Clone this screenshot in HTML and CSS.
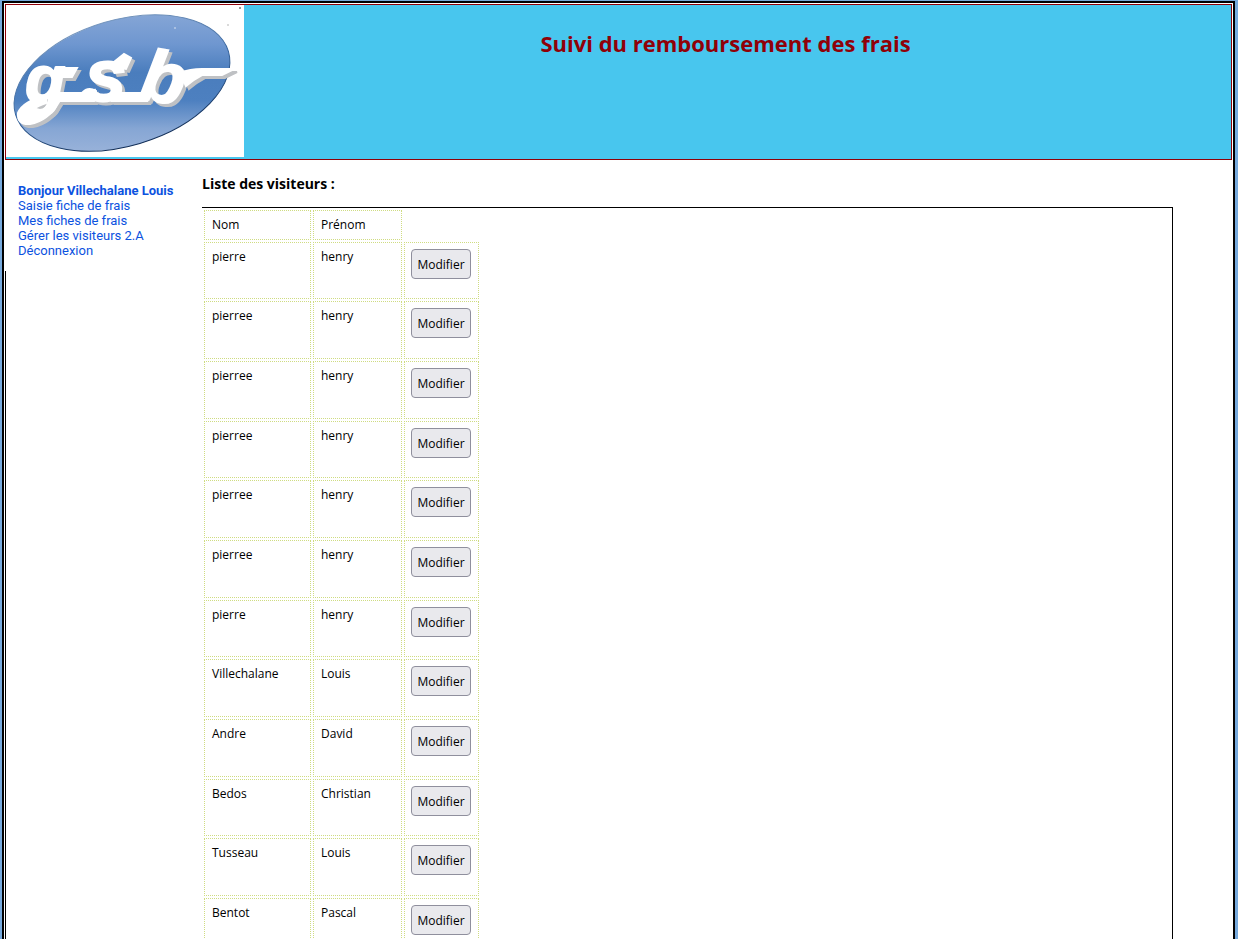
FILE: index.html
```html
<!DOCTYPE html>
<html lang="fr">
<head>
<meta charset="utf-8">
<title>Suivi du remboursement des frais</title>
<link rel="stylesheet" href="styles.css">
</head>
<body>
<div class="page">
  <header class="banner">
    <svg class="logo" viewBox="0 0 238 152" role="img" aria-label="gsb">
      <defs>
        <linearGradient id="oval" x1="0" y1="0" x2="0" y2="1">
          <stop offset="0" stop-color="#86a6d6"/>
          <stop offset=".22" stop-color="#6f97d0"/>
          <stop offset=".42" stop-color="#4a7dbd"/>
          <stop offset=".62" stop-color="#4d80c0"/>
          <stop offset=".82" stop-color="#86a6d4"/>
          <stop offset="1" stop-color="#9ab3da"/>
        </linearGradient>
        <linearGradient id="rim" x1="0" y1="0" x2="0" y2="1">
          <stop offset="0" stop-color="#7495bd"/>
          <stop offset=".5" stop-color="#34639d"/>
          <stop offset="1" stop-color="#102d57"/>
        </linearGradient>
        <clipPath id="ovalClip"><ellipse cx="116" cy="78" rx="111" ry="63" transform="rotate(-16.5 116 78)"/></clipPath>
        <g id="lettering">
          <text x="19" y="97" font-size="66">g</text>
          <text x="79" y="96" font-size="74">s</text>
          <text x="0" y="0" font-size="72" transform="translate(132 93) rotate(10)">b</text>
          <path d="M51 63H71L66 72H54ZM50 88H76Q82 81 90 86L88 96H46ZM110 88H138L141 96H106Z"/>
          <path d="M40 91Q17 96 12 108Q11 120 24 119Q42 116 53 97L45 96Q37 108 25 111Q22 104 40 98Z"/>
          <path d="M103 61L118 49L125 53L120 64Z"/>
          <path d="M174 68Q184 64 196 64H228L216 70H196Q188 74 180 81Z"/>
        </g>
      </defs>
      <rect width="238" height="152" fill="#fff"/>
      <g clip-path="url(#ovalClip)"><rect x="6" y="8" width="220" height="141" fill="url(#oval)"/></g>
      <ellipse cx="116" cy="78" rx="111" ry="63" transform="rotate(-16.5 116 78)" fill="none" stroke="url(#rim)" stroke-width="1"/>
      <use href="#lettering" x="3" y="3" class="logo-shadow"/>
      <use href="#lettering" class="logo-letters"/>
      <circle cx="234" cy="3" r="1" fill="#777"/><circle cx="222" cy="20" r=".7" fill="#999"/><circle cx="169" cy="23" r="1" fill="#b8cbe7"/>
    </svg>
    <h1>Suivi du remboursement des frais</h1>
  </header>
  <div class="columns">
    <div class="side">
      <nav class="menu" aria-label="Menu">
        <strong>Bonjour Villechalane Louis</strong>
        <a href="#saisie">Saisie fiche de frais</a>
        <a href="#fiches">Mes fiches de frais</a>
        <a href="#visiteurs">Gérer les visiteurs 2.A</a>
        <a href="#sortie">Déconnexion</a>
      </nav>
    </div>
    <main class="content">
      <h2>Liste des visiteurs :</h2>
      <div class="frame">
        <table class="visitors">
          <thead><tr><th scope="col">Nom</th><th scope="col">Prénom</th></tr></thead>
          <tbody>
            <tr><td>pierre</td><td>henry</td><td><button type="button">Modifier</button></td></tr>
            <tr><td>pierree</td><td>henry</td><td><button type="button">Modifier</button></td></tr>
            <tr><td>pierree</td><td>henry</td><td><button type="button">Modifier</button></td></tr>
            <tr><td>pierree</td><td>henry</td><td><button type="button">Modifier</button></td></tr>
            <tr><td>pierree</td><td>henry</td><td><button type="button">Modifier</button></td></tr>
            <tr><td>pierree</td><td>henry</td><td><button type="button">Modifier</button></td></tr>
            <tr><td>pierre</td><td>henry</td><td><button type="button">Modifier</button></td></tr>
            <tr><td>Villechalane</td><td>Louis</td><td><button type="button">Modifier</button></td></tr>
            <tr><td>Andre</td><td>David</td><td><button type="button">Modifier</button></td></tr>
            <tr><td>Bedos</td><td>Christian</td><td><button type="button">Modifier</button></td></tr>
            <tr><td>Tusseau</td><td>Louis</td><td><button type="button">Modifier</button></td></tr>
            <tr><td>Bentot</td><td>Pascal</td><td><button type="button">Modifier</button></td></tr>
          </tbody>
        </table>
      </div>
    </main>
  </div>
</div>
</body>
</html>
```
FILE: styles.css
```css
* { box-sizing: border-box; }

body {
  margin: 0;
  padding: 1px 3px 1px 2px;
  background: #77aadd;
  color: #000;
  font: 13px/15px "Trebuchet MS", "Open Sans", sans-serif;
}

.page {
  min-height: 100vh;
  padding: 1px;
  border: 2px solid #000;
  background: #fff;
}

.banner {
  display: flex;
  align-items: flex-start;
  height: 156px;
  border: 1px solid #900008;
  background: #48c6ee;
}

.logo { flex: none; width: 238px; height: 152px; }
.logo text { font-family: "Liberation Sans", sans-serif; font-weight: 700; font-style: italic; }
.logo-letters { fill: #fff; stroke: #fff; stroke-width: 2px; }
.logo-shadow { fill: #bfc1c4; stroke: #bfc1c4; stroke-width: 2px; }

.banner h1 {
  flex: 1;
  margin: 23px 24px 0 0;
  color: #900008;
  font-size: 22px;
  line-height: 30px;
  text-align: center;
}

.columns { display: flex; }

.side {
  display: flex;
  flex: none;
  flex-direction: column;
  width: 197px;
}
.side::after { content: ""; flex: 1; border-left: 1px solid #000; }

.menu {
  display: flex;
  flex-direction: column;
  height: 111px;
  padding: 23px 0 0 13px;
  color: #0b52e0;
  font-family: "Trebuchet MS", Roboto, sans-serif;
  white-space: nowrap;
}
.menu a { color: inherit; text-decoration: none; }

.content { flex: 1; margin-right: 59px; }
.content h2 { margin: 14px 0 13px; font-size: 14px; line-height: 20px; }

.frame { border: solid #000; border-width: 1px 1px 0 0; }

.visitors { border-spacing: 2px; font-size: 12px; }
.visitors th, .visitors td {
  padding: 6px;
  border: 1px dotted #cfdc82;
  font-weight: 400;
  text-align: left;
  vertical-align: top;
}
.visitors th { height: 30px; }
.visitors td { height: 58px; }
.visitors tbody tr:nth-child(3n+1) td { height: 57px; }
.visitors tr > :nth-child(1) { width: 107px; padding-left: 7px; }
.visitors tr > :nth-child(2) { width: 89px; padding-left: 7px; }
.visitors tr > :nth-child(3) { width: 75px; }

button {
  width: 60px;
  height: 30px;
  padding: 1px 0 0;
  border: 1px solid #8f8f9d;
  border-radius: 4px;
  background: #e9e9ed;
  color: #000;
  font: 12px/16px "Trebuchet MS", "Open Sans", sans-serif;
}
```
